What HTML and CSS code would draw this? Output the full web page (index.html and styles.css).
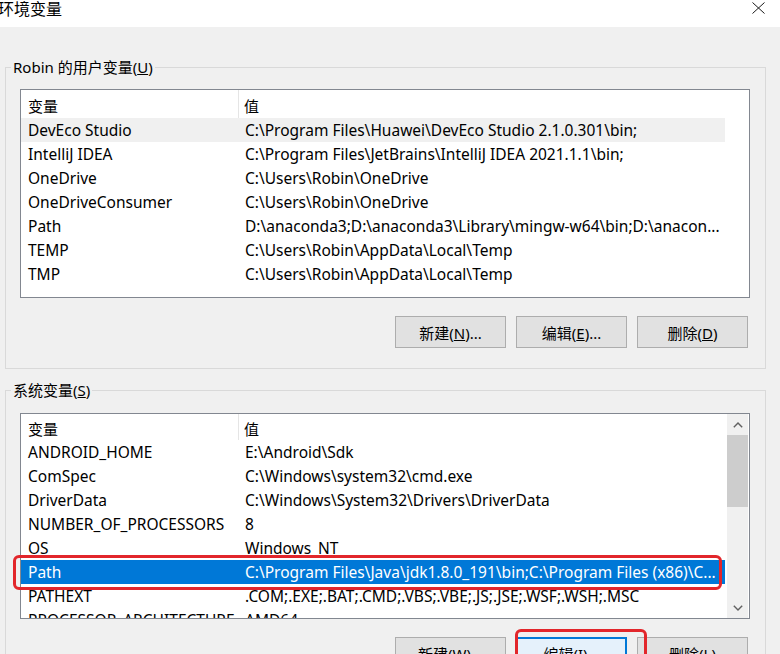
FILE: index.html
```html
<!DOCTYPE html>
<html lang="zh-CN">
<head>
<meta charset="utf-8">
<title>环境变量</title>
<link rel="stylesheet" href="styles.css">
</head>
<body>
<div class="window">
  <header class="titlebar">
    <span class="title">环境变量</span>
    <svg class="close" width="13" height="12" viewBox="0 0 13 12" aria-hidden="true"><path d="M0.5 0.5 L12.5 11.5 M12.5 0.5 L0.5 11.5" stroke="#1a1a1a" stroke-width="1" fill="none"/></svg>
  </header>
  <main class="content">
    <fieldset class="group group-user">
      <legend>Robin 的用户变量(<u>U</u>)</legend>
      <div class="group-body">
        <div class="list list-user">
          <div class="rows">
            <div class="row head"><span class="c1">变量</span><span class="c2">值</span></div>
            <div class="row hover"><span class="c1">DevEco Studio</span><span class="c2">C:\Program Files\Huawei\DevEco Studio 2.1.0.301\bin;</span></div>
            <div class="row"><span class="c1">IntelliJ IDEA</span><span class="c2">C:\Program Files\JetBrains\IntelliJ IDEA 2021.1.1\bin;</span></div>
            <div class="row"><span class="c1">OneDrive</span><span class="c2">C:\Users\Robin\OneDrive</span></div>
            <div class="row"><span class="c1">OneDriveConsumer</span><span class="c2">C:\Users\Robin\OneDrive</span></div>
            <div class="row"><span class="c1">Path</span><span class="c2">D:\anaconda3;D:\anaconda3\Library\mingw-w64\bin;D:\anacon...</span></div>
            <div class="row"><span class="c1">TEMP</span><span class="c2">C:\Users\Robin\AppData\Local\Temp</span></div>
            <div class="row"><span class="c1">TMP</span><span class="c2">C:\Users\Robin\AppData\Local\Temp</span></div>
          </div>
        </div>
        <div class="buttons">
          <button class="btn">新建(<u>N</u>)...</button>
          <button class="btn">编辑(<u>E</u>)...</button>
          <button class="btn">删除(<u>D</u>)</button>
        </div>
      </div>
    </fieldset>
    <fieldset class="group group-sys">
      <legend>系统变量(<u>S</u>)</legend>
      <div class="group-body">
        <div class="list list-sys">
          <div class="rows">
            <div class="row head"><span class="c1">变量</span><span class="c2">值</span></div>
            <div class="row"><span class="c1">ANDROID_HOME</span><span class="c2">E:\Android\Sdk</span></div>
            <div class="row"><span class="c1">ComSpec</span><span class="c2">C:\Windows\system32\cmd.exe</span></div>
            <div class="row"><span class="c1">DriverData</span><span class="c2">C:\Windows\System32\Drivers\DriverData</span></div>
            <div class="row"><span class="c1">NUMBER_OF_PROCESSORS</span><span class="c2">8</span></div>
            <div class="row"><span class="c1">OS</span><span class="c2">Windows_NT</span></div>
            <div class="row selected"><span class="c1">Path</span><span class="c2">C:\Program Files\Java\jdk1.8.0_191\bin;C:\Program Files (x86)\C...</span></div>
            <div class="row"><span class="c1">PATHEXT</span><span class="c2">.COM;.EXE;.BAT;.CMD;.VBS;.VBE;.JS;.JSE;.WSF;.WSH;.MSC</span></div>
            <div class="row"><span class="c1">PROCESSOR_ARCHITECTURE</span><span class="c2">AMD64</span></div>
          </div>
          <div class="scrollbar">
            <span class="arrow"><svg width="10" height="6" viewBox="0 0 10 6"><polyline points="0.8,5.2 5,1 9.2,5.2" fill="none" stroke="#606060" stroke-width="1.4"/></svg></span>
            <span class="thumb"></span>
            <span class="track"></span>
            <span class="arrow"><svg width="10" height="6" viewBox="0 0 10 6"><polyline points="0.8,0.8 5,5 9.2,0.8" fill="none" stroke="#606060" stroke-width="1.4"/></svg></span>
          </div>
        </div>
        <div class="buttons">
          <button class="btn">新建(<u>W</u>)...</button>
          <button class="btn default">编辑(<u>I</u>)...</button>
          <button class="btn">删除(<u>L</u>)</button>
        </div>
      </div>
    </fieldset>
  </main>
  <div class="mark mark-path"></div>
  <div class="mark mark-btn"></div>
</div>
</body>
</html>
```

FILE: styles.css
```css
* { box-sizing: border-box; }

html, body {
  margin: 0;
  padding: 0;
  background: #f0f0f0;
}

body {
  font-family: "Noto Sans", "Noto Sans CJK SC", sans-serif;
  font-size: 15px;
  color: #000;
}

.window {
  position: relative;
  width: 780px;
  height: 654px;
  overflow: hidden;
  background: #f0f0f0;
}

.titlebar {
  height: 27px;
  background: #fff;
  display: flex;
  justify-content: space-between;
  align-items: flex-start;
}

.title {
  font-size: 16px;
  line-height: 18px;
  margin-left: -2px;
}

.close {
  margin-top: 2px;
  margin-right: 15px;
}

.content {
  padding: 30px 14px 0 5px;
}

.group {
  margin: 0;
  padding: 0;
  border: 1px solid #d9d9d9;
  min-width: 0;
}

.group legend {
  font-size: 15px;
  line-height: 20px;
  padding: 0 2px;
  margin-left: 5px;
}

.group-body {
  padding: 12px 15px 20px 14px;
}

.group-sys {
  margin-top: 11px;
}

.group-sys .group-body {
  padding-top: 13px;
}

.list {
  background: #fff;
  border: 1px solid #828790;
  display: flex;
  overflow: hidden;
}

.list-user { height: 209px; }
.list-sys { height: 206px; }

.rows {
  flex: 1;
  overflow: hidden;
}

.row {
  width: 704px;
  height: 24px;
  display: flex;
  align-items: center;
  white-space: nowrap;
  font-size: 15.5px;
}

.row .c1 {
  width: 218px;
  padding-left: 7px;
  overflow: hidden;
}

.row .c2 {
  width: 486px;
  padding-left: 6px;
  overflow: hidden;
}

.row.head {
  align-items: stretch;
  font-size: 15px;
}

.list-user .row.head { height: 28px; }
.list-sys .row.head { height: 26px; }

.row.head .c1,
.row.head .c2 {
  display: flex;
  align-items: center;
  padding-top: 2px;
}

.row.head .c1 {
  border-right: 1px solid #e5e5e5;
}

.row.head .c2 {
  padding-left: 5px;
}

.row.hover {
  background: #f0f0f0;
}

.row.selected {
  background: #0078d7;
  color: #fff;
}

.scrollbar {
  width: 21px;
  margin: 0 1px 0 2px;
  background: #f0f0f0;
  display: flex;
  flex-direction: column;
}

.scrollbar .arrow {
  height: 21px;
  display: flex;
  align-items: center;
  justify-content: center;
}

.scrollbar .thumb {
  height: 72px;
  background: #cdcdcd;
}

.scrollbar .track {
  flex: 1;
}

.buttons {
  display: flex;
  justify-content: flex-end;
  gap: 10px;
  margin-top: 18px;
  padding-right: 2px;
}

.btn {
  width: 111px;
  height: 32px;
  background: #e1e1e1;
  border: 1px solid #adadad;
  font-family: "Noto Sans", "Noto Sans CJK SC", sans-serif;
  font-size: 15px;
  color: #000;
  padding: 0;
  margin: 0;
}

.btn.default {
  background: #e5f1fb;
  border: 2px solid #0078d7;
}

.mark {
  position: absolute;
  border: 3px solid #e2262b;
  border-radius: 6px;
}

.mark-path {
  left: 13px;
  top: 555px;
  width: 709px;
  height: 35px;
}

.mark-btn {
  left: 515px;
  top: 629px;
  width: 132px;
  height: 44px;
}
```
